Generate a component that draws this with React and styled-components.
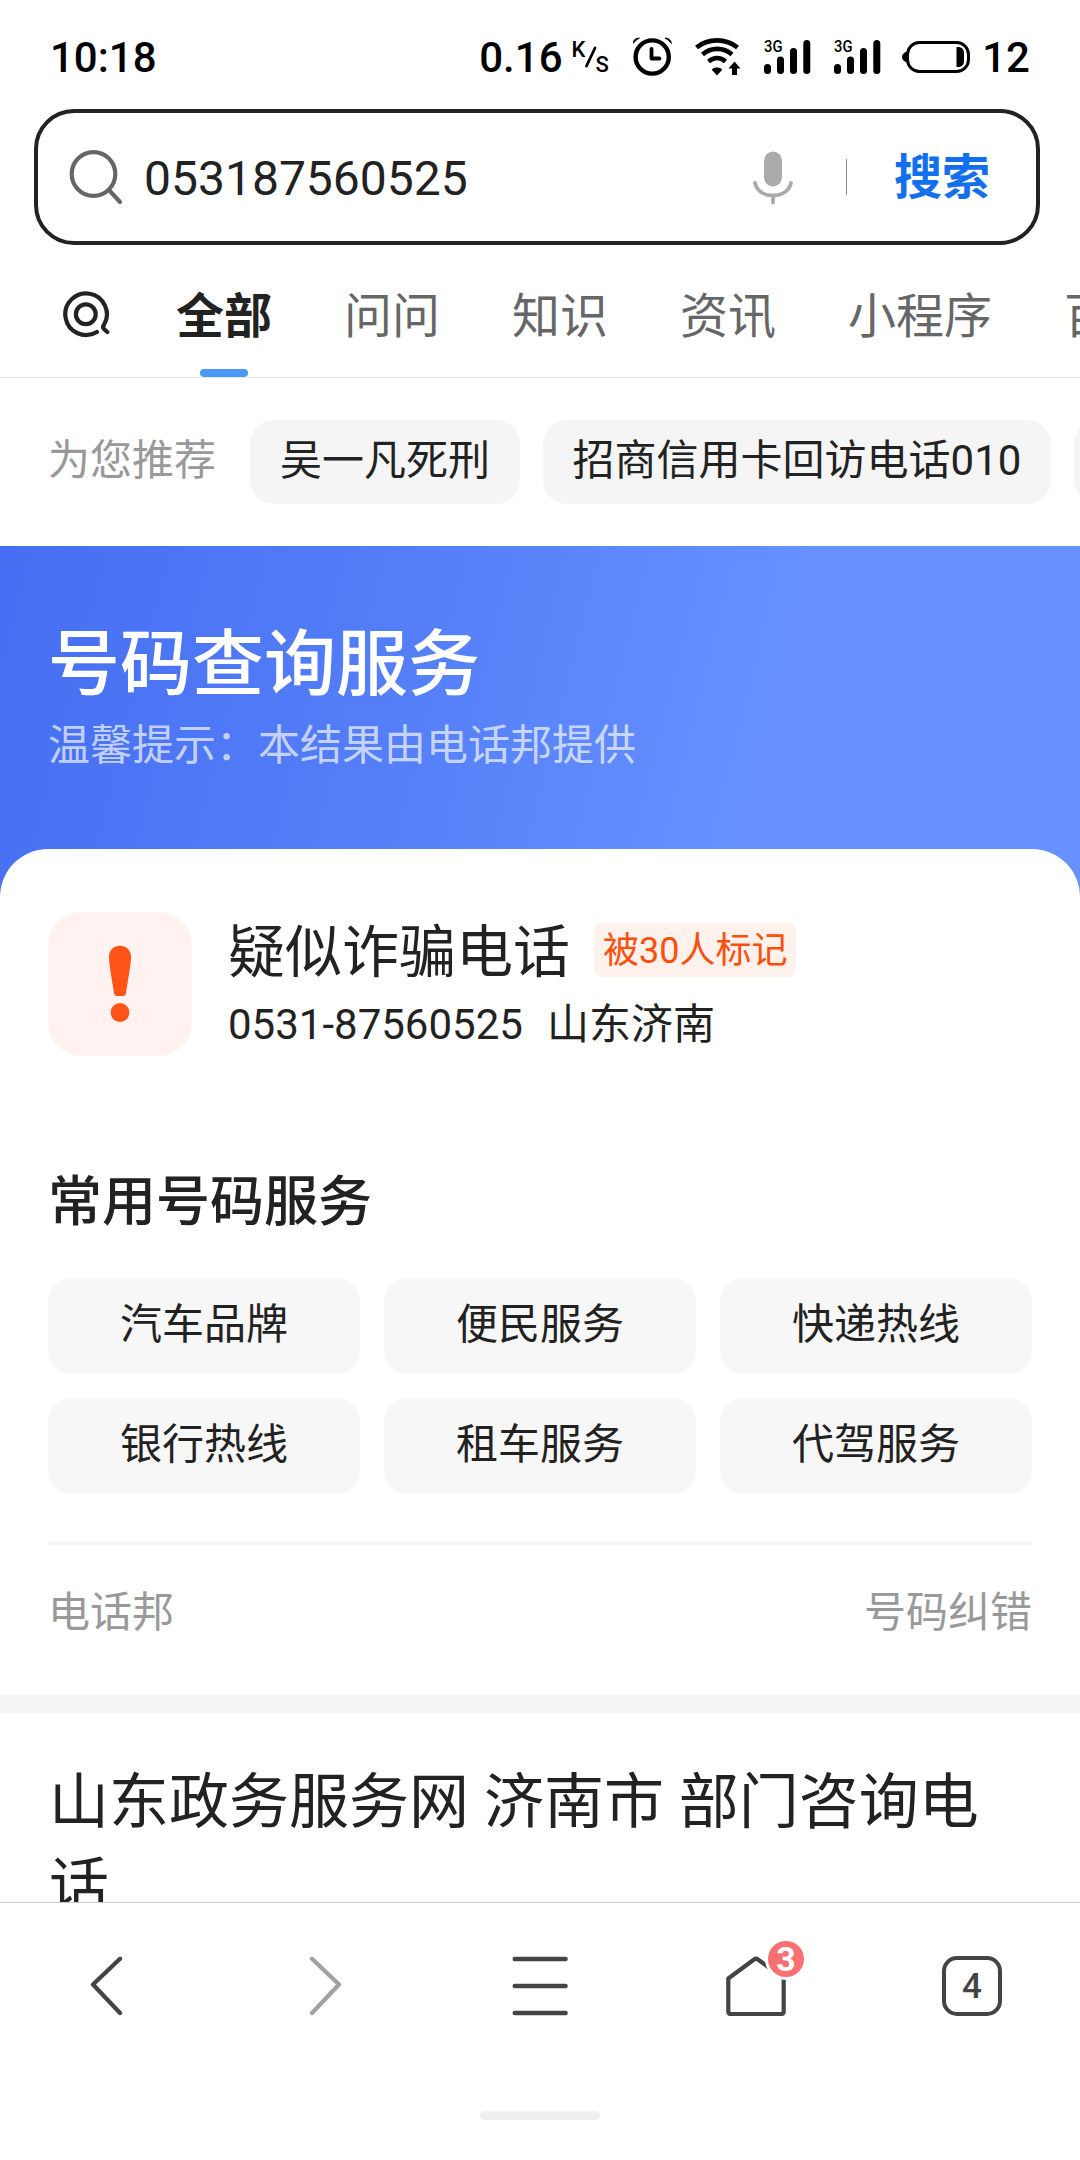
import React from 'react';
import styled, { createGlobalStyle } from 'styled-components';

const Global = createGlobalStyle`
  * { box-sizing: border-box; }
  body {
    margin: 0;
    background: #fff;
    color: #222;
    font-family: Roboto, "Noto Sans CJK SC", sans-serif;
  }
  svg { display: block; flex: none; }
`;

const Page = styled.div`
  width: 1080px;
  height: 2160px;
  display: flex;
  flex-direction: column;
  overflow: hidden;
  background: #fff;
`;

const StatusBar = styled.header`
  height: 109px;
  flex: none;
  display: flex;
  align-items: flex-start;
  justify-content: space-between;
  padding: 32px 50px 0 50px;
  color: #000;
  font-size: 42px;
  font-weight: 500;
  line-height: 51px;
`;

const StatusRight = styled.div`
  display: flex;
  align-items: flex-start;
`;

const Speed = styled.span`
  margin-right: 9px;
`;

const UnitTop = styled.span`
  font-size: 22px;
  line-height: 24px;
  padding-top: 6px;
`;

const UnitSlash = styled.svg`
  margin-right: -2px;
`;

const UnitBottom = styled.span`
  font-size: 22px;
  line-height: 24px;
  padding-top: 21px;
  margin-right: 24px;
`;

const StatusIcon = styled.svg`
  margin-right: ${(p) => p.$gap}px;
`;

const Signal = styled.div`
  position: relative;
  margin-right: ${(p) => p.$gap}px;
`;

const SignalLabel = styled.span`
  position: absolute;
  left: 0;
  top: 6px;
  font-size: 17px;
  line-height: 17px;
  transform: scaleX(0.87);
  transform-origin: left;
`;

const SearchBox = styled.div`
  flex: none;
  height: 136px;
  margin: 0 40px 0 34px;
  padding: 0 46px 0 31px;
  border: 4px solid #222;
  border-radius: 40px;
  display: flex;
  align-items: center;
`;

const Query = styled.div`
  flex: 1;
  padding: 3px 0 0 19px;
  font-size: 48px;
  line-height: 60px;
`;

const Mic = styled.svg`
  margin-top: 2px;
`;

const Rule = styled.span`
  width: 1px;
  height: 36px;
  margin: 0 47px 0 53px;
  background: #8c8c8c;
`;

const SearchAction = styled.span`
  padding-top: 2px;
  font-size: 48px;
  font-weight: 700;
  line-height: 60px;
  color: #136fec;
`;

const Tabs = styled.nav`
  flex: none;
  height: 133px;
  display: flex;
  gap: 72px;
  padding-left: 59px;
  border-bottom: 1px solid #e6e6e6;
  overflow: hidden;
  white-space: nowrap;
`;

const LogoTab = styled.div`
  width: 45px;
  padding-top: 43px;
`;

const Tab = styled.div`
  display: flex;
  flex-direction: column;
  align-items: center;
  justify-content: space-between;
  padding-top: 42px;
  font-size: 48px;
  line-height: 60px;
  font-weight: ${(p) => (p.$active ? 700 : 400)};
  color: ${(p) => (p.$active ? '#222' : '#666')};

  &::after {
    content: "";
    width: 48px;
    height: 8px;
    border-radius: 4px;
    background: ${(p) => (p.$active ? '#4e98f8' : 'transparent')};
  }
`;

const Suggest = styled.div`
  flex: none;
  height: 168px;
  display: flex;
  align-items: center;
  padding-left: 48px;
  font-size: 42px;
  line-height: 60px;
  white-space: nowrap;
  overflow: hidden;
`;

const SuggestLabel = styled.span`
  color: #999;
  padding-bottom: 2px;
  margin-right: 34px;
`;

const Pill = styled.span`
  flex: none;
  height: 84px;
  min-width: 120px;
  margin-right: 22.5px;
  padding: 11px 30px 0;
  border-radius: 24px;
  background: #f5f5f5;
`;

const Content = styled.main`
  flex: 1;
  min-height: 0;
  overflow: hidden;
`;

const Banner = styled.section`
  height: 354px;
  padding: 74px 48px 0;
  color: #fff;
  background: linear-gradient(104deg, #456ef2 0%, #5680f8 40%, #6691ff 70%, #6691ff 100%);
`;

const BannerTitle = styled.h1`
  margin: 0;
  font-size: 72px;
  font-weight: 500;
  line-height: 90px;
`;

const BannerHint = styled.p`
  margin: 9px 0 0;
  font-size: 42px;
  line-height: 54px;
  color: rgba(255, 255, 255, 0.68);
`;

const Card = styled.section`
  height: 846px;
  margin-top: -51px;
  padding: 63px 48px 0;
  border-radius: 48px 48px 0 0;
  background: #fff;
`;

const Caller = styled.div`
  display: flex;
  height: 144px;
`;

const AlertTile = styled.div`
  width: 144px;
  height: 144px;
  margin-right: 36px;
  border-radius: 33px;
  background: #fff2f0;
`;

const CallerInfo = styled.div`
  display: flex;
  flex-direction: column;
  padding-top: 5px;
`;

const CallerLine = styled.div`
  display: flex;
  align-items: center;
`;

const CallerName = styled.span`
  font-size: 57px;
  line-height: 72px;
`;

const MarkTag = styled.span`
  height: 54px;
  margin: 0 0 6px 24px;
  padding: 3px 9px 0;
  border-radius: 8px;
  background: #fff1ec;
  color: #fb4f0c;
  font-size: 36px;
  line-height: 50px;
`;

const PhoneLine = styled.div`
  display: flex;
  gap: 24px;
  padding-top: 6px;
  font-size: 42px;
  line-height: 60px;
`;

const SectionTitle = styled.h2`
  margin: 108px 0 0;
  font-size: 54px;
  font-weight: 500;
  line-height: 78px;
`;

const ServiceGrid = styled.div`
  display: grid;
  grid-template-columns: repeat(3, 312px);
  gap: 24px;
  margin-top: 36px;
`;

const Service = styled.div`
  height: 96px;
  padding-top: 17px;
  border-radius: 24px;
  background: #f7f7f7;
  text-align: center;
  font-size: 42px;
  line-height: 60px;
`;

const CardFooter = styled.footer`
  display: flex;
  justify-content: space-between;
  margin-top: 48px;
  padding-top: 38px;
  border-top: 3px solid #f5f5f5;
  font-size: 42px;
  line-height: 60px;
  color: #999;
`;

const Result = styled.article`
  border-top: 18px solid #f5f5f5;
  padding: 48px 89px 0 49px;
`;

const ResultTitle = styled.h3`
  margin: 0;
  font-size: 60px;
  font-weight: 400;
  line-height: 84px;
`;

const BottomBar = styled.footer`
  flex: none;
  height: 258px;
  border-top: 1px solid #ccc;
  display: flex;
  flex-direction: column;
  align-items: center;
  justify-content: space-between;
  padding-bottom: 40px;
`;

const NavRow = styled.div`
  width: 100%;
  display: grid;
  grid-template-columns: repeat(5, 1fr);
  justify-items: center;
  padding-top: 53px;
`;

const NavItem = styled.div`
  position: relative;
  width: 60px;
  height: 60px;
`;

const TabCount = styled(NavItem)`
  border: 4px solid #444;
  border-radius: 15px;
  text-align: center;
  color: #444;
  font-size: 35px;
  font-weight: 500;
  line-height: 53px;
`;

const Badge = styled.span`
  position: absolute;
  left: 39px;
  top: -18px;
  width: 42px;
  height: 42px;
  border: 3px solid #fff;
  border-radius: 50%;
  background: #fa7072;
  color: #fff;
  text-align: center;
  font-size: 34px;
  font-weight: 700;
  line-height: 37px;
`;

const HomeHandle = styled.div`
  width: 120px;
  height: 9px;
  border-radius: 5px;
  background: #efefef;
`;

const SignalIcon = ({ gap }) => (
  <Signal $gap={gap}>
    <SignalLabel>3G</SignalLabel>
    <svg width="47" height="50" viewBox="0 0 47 50" stroke="#000" strokeWidth="7" strokeLinecap="round">
      <path d="M3.5 35.5V38.5M16.5 28V38.5M29.5 19.5V38.5M42.8 11.5V38.5" />
    </svg>
  </Signal>
);

const services = ['汽车品牌', '便民服务', '快递热线', '银行热线', '租车服务', '代驾服务'];
const tabs = ['全部', '问问', '知识', '资讯', '小程序', '百科'];

export default function App() {
  return (
    <Page lang="zh-CN">
      <Global />
      <StatusBar>
        <span>10:18</span>
        <StatusRight>
          <Speed>0.16</Speed>
          <UnitTop>K</UnitTop>
          <UnitSlash width="12" height="50" viewBox="0 0 12 50" stroke="#000" strokeWidth="2.8" strokeLinecap="round">
            <path d="M1.5 34L10 16" />
          </UnitSlash>
          <UnitBottom>S</UnitBottom>
          <StatusIcon $gap={23} width="39" height="50" viewBox="0 0 39 50" fill="none" stroke="#000">
            <circle cx="19.2" cy="25" r="16.6" strokeWidth="4.4" />
            <path d="M18.5 17V26.500H26.500" strokeWidth="3.8" strokeLinejoin="round" strokeLinecap="round" />
            <path d="M0 11.500Q0.500 6 6.500 6Q3 7.500 0 11.500ZM38.400 11.500Q37.900 6 31.900 6Q35.400 7.500 38.400 11.500Z" fill="#000" strokeWidth="0.8" />
          </StatusIcon>
          <StatusIcon $gap={23} width="46" height="50" viewBox="0 0 46 50" fill="none" stroke="#000" strokeWidth="4.6">
            <path d="M1.5 15.500C13 6 31 6 42.500 15.500M7.500 22.500C16 15 28.500 15 37 22.500M13.500 29.500C19 25 25.500 25 30.500 29.500" />
            <path d="M22 35.500C25 35.500 27.500 37 27 38L22 43.500L17 38C16.500 37 19 35.500 22 35.500Z" fill="#000" stroke="none" />
            <path d="M39.500 29.500L45.500 36.500H42V43H37V36.500H33.500Z" fill="#000" stroke="none" />
          </StatusIcon>
          <SignalIcon gap={23} />
          <SignalIcon gap={21} />
          <StatusIcon $gap={12.5} width="68" height="50" viewBox="0 0 68 50" fill="none" stroke="#000">
            <rect x="5.500" y="10.500" width="61" height="29" rx="12" strokeWidth="3" />
            <path d="M5 19.500V30.500Q0 28.500 0 25Q0 21.500 5 19.500Z" fill="#000" stroke="none" />
            <path d="M54.500 15H56C60 15 62 17.500 62 21V29C62 32.500 60 35 56 35H54.500Z" fill="#000" stroke="none" />
          </StatusIcon>
          <span>12</span>
        </StatusRight>
      </StatusBar>

      <SearchBox>
        <svg width="56" height="56" viewBox="0 0 56 56" fill="none" stroke="#666" strokeWidth="4.200" strokeLinecap="round">
          <circle cx="24.500" cy="25" r="21.800" />
          <path d="M40 41L51 53" />
        </svg>
        <Query>053187560525</Query>
        <Mic width="40" height="54" viewBox="0 0 40 54" fill="none">
          <rect x="11" y="0.500" width="18" height="35" rx="9" fill="#aaa" />
          <path d="M2 32C4 40 11 44.500 20 44.500S36 40 38 32M20 45V51.500" stroke="#aaa" strokeWidth="3.800" strokeLinecap="round" />
        </Mic>
        <Rule />
        <SearchAction>搜索</SearchAction>
      </SearchBox>

      <Tabs>
        <LogoTab>
          <svg width="53" height="52" viewBox="0 0 53 52" fill="none" stroke="#222" strokeWidth="4.200" strokeLinecap="round" strokeLinejoin="round">
            <path d="M37.900 44A20.800 20.800 0 1 1 45 36.800Q43 39.500 45.500 41.500L48.300 44" />
            <circle cx="26.800" cy="26.200" r="9.900" />
          </svg>
        </LogoTab>
        {tabs.map((t, i) => (
          <Tab key={t} $active={i === 0}>{t}</Tab>
        ))}
      </Tabs>

      <Suggest>
        <SuggestLabel>为您推荐</SuggestLabel>
        <Pill>吴一凡死刑</Pill>
        <Pill>招商信用卡回访电话010</Pill>
        <Pill />
      </Suggest>

      <Content>
        <Banner>
          <BannerTitle>号码查询服务</BannerTitle>
          <BannerHint>温馨提示：本结果由电话邦提供</BannerHint>
        </Banner>
        <Card>
          <Caller>
            <AlertTile>
              <svg width="144" height="144" viewBox="0 0 144 144" fill="#ff5318">
                <path d="M61 45C61 30 83 30 83 45C83 52 80 68 78 81Q77.600 84 75 84H69Q66.400 84 66 81C64 68 61 52 61 45Z" />
                <circle cx="72" cy="100.500" r="9.400" />
              </svg>
            </AlertTile>
            <CallerInfo>
              <CallerLine>
                <CallerName>疑似诈骗电话</CallerName>
                <MarkTag>被30人标记</MarkTag>
              </CallerLine>
              <PhoneLine>
                <span>0531-87560525</span>
                <span>山东济南</span>
              </PhoneLine>
            </CallerInfo>
          </Caller>
          <SectionTitle>常用号码服务</SectionTitle>
          <ServiceGrid>
            {services.map((s) => (
              <Service key={s}>{s}</Service>
            ))}
          </ServiceGrid>
          <CardFooter>
            <span>电话邦</span>
            <span>号码纠错</span>
          </CardFooter>
        </Card>
        <Result>
          <ResultTitle>山东政务服务网 济南市 部门咨询电话</ResultTitle>
        </Result>
      </Content>

      <BottomBar>
        <NavRow>
          <NavItem>
            <svg width="60" height="60" viewBox="0 0 60 60" fill="none" stroke="#444" strokeWidth="4.300" strokeLinecap="round" strokeLinejoin="round">
              <path d="M42 2.800L15 28.500L42 57" />
            </svg>
          </NavItem>
          <NavItem>
            <svg width="60" height="60" viewBox="0 0 60 60" fill="none" stroke="#a2a2a2" strokeWidth="4.300" strokeLinecap="round" strokeLinejoin="round">
              <path d="M18 2.800L45 28.500L18 57" />
            </svg>
          </NavItem>
          <NavItem>
            <svg width="60" height="60" viewBox="0 0 60 60" stroke="#444" strokeWidth="4.600" strokeLinecap="round">
              <path d="M4.800 3H55.500M4.800 30H55.500M4.800 57H55.500" />
            </svg>
          </NavItem>
          <NavItem>
            <svg width="60" height="60" viewBox="0 0 60 60" fill="none" stroke="#444" strokeWidth="4.200" strokeLinejoin="round">
              <path d="M2.300 22.500L28 3.500Q30 2 32 3.500L57.700 22.500V55.500Q57.700 58 55 58H5Q2.300 58 2.300 55.500Z" />
            </svg>
            <Badge>3</Badge>
          </NavItem>
          <TabCount>4</TabCount>
        </NavRow>
        <HomeHandle />
      </BottomBar>
    </Page>
  );
}
